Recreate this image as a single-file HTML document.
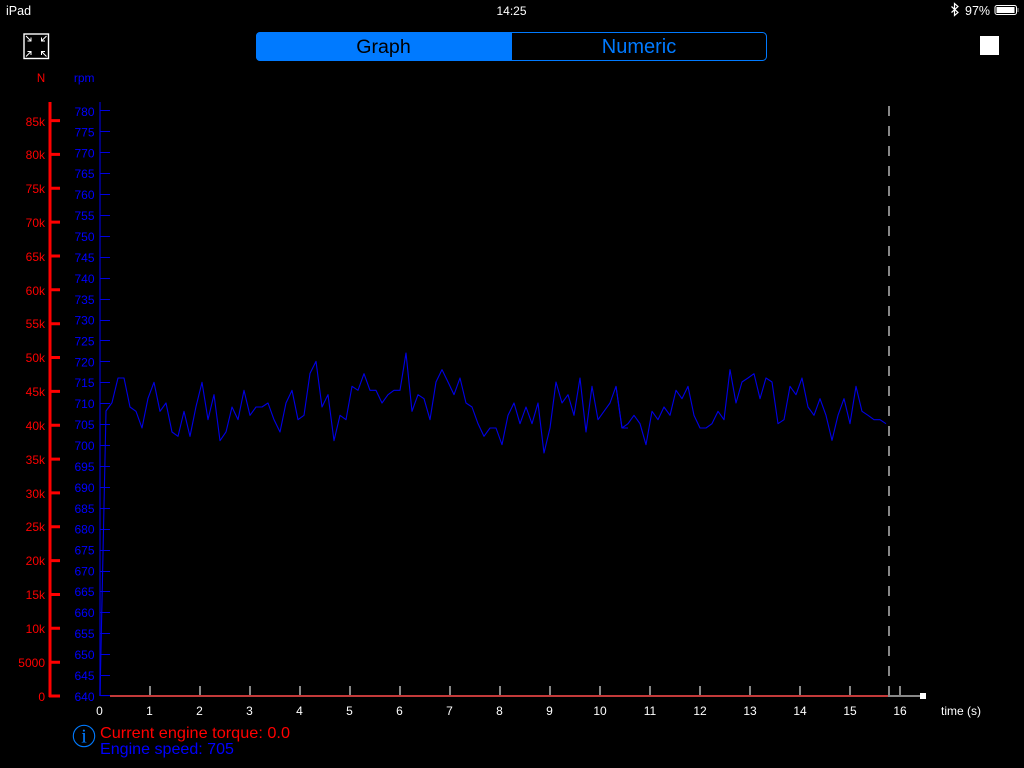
<!DOCTYPE html>
<html><head><meta charset="utf-8"><title>Graph</title>
<style>
html,body{margin:0;padding:0;background:#000;width:1024px;height:768px;overflow:hidden}
svg{position:absolute;left:0;top:0;font-family:"Liberation Sans",Arial,sans-serif}
</style></head>
<body>
<svg width="1024" height="768" viewBox="0 0 1024 768">
<rect width="1024" height="768" fill="#000"/>
<!-- status bar -->
<g fill="#fff" font-size="12.5">
<text x="6" y="15">iPad</text>
<text x="511.5" y="15" font-size="12" text-anchor="middle">14:25</text>
<text x="965" y="15" font-size="12.5">97%</text>
</g>
<path d="M951.5 6.5 L958 12.5 L954.5 15.5 V3.5 L958 6.5 L951.5 12.5" fill="none" stroke="#fff" stroke-width="1.2"/>
<rect x="995" y="5.5" width="21.5" height="9" rx="2" fill="none" stroke="#fff" stroke-width="1"/>
<rect x="996.5" y="7" width="18" height="6" fill="#fff"/>
<rect x="1017.5" y="8" width="1" height="4" fill="#999"/>
<!-- expand icon -->
<rect x="24" y="34" width="24.5" height="24.5" fill="none" stroke="#fff" stroke-width="1.4"/>
<g fill="none" stroke="#fff" stroke-width="1">
<path d="M26 36 L31 41 M31 37.5 V41 H27.5"/>
<path d="M46.5 36 L41.5 41 M41.5 37.5 V41 H45"/>
<path d="M26 56.5 L31 51.5 M27.5 51.5 H31 V55"/>
<path d="M46.5 56.5 L41.5 51.5 M45 51.5 H41.5 V55"/>
</g>
<!-- segmented control -->
<rect x="256.5" y="32.5" width="510" height="28" rx="4" fill="#000" stroke="#007aff"/>
<path d="M260 32 H512 V61 H260 A4 4 0 0 1 256 57 V36 A4 4 0 0 1 260 32 Z" fill="#007aff"/>
<text x="383.5" y="53" font-size="19.6" text-anchor="middle" fill="#000">Graph</text>
<text x="639" y="53" font-size="20" text-anchor="middle" fill="#007aff">Numeric</text>
<!-- stop -->
<rect x="980" y="36" width="19" height="19" fill="#fff"/>
<!-- axis titles -->
<text x="41" y="82" font-size="11.5" text-anchor="middle" fill="#f00">N</text>
<text x="94.5" y="82" font-size="12" text-anchor="end" fill="#00f">rpm</text>
<!-- red axis -->
<path d="M50 102 V697 M49 696 H60 M50 662.2 H60 M50 628.3 H60 M50 594.5 H60 M50 560.6 H60 M50 526.8 H60 M50 492.9 H60 M50 459.1 H60 M50 425.2 H60 M50 391.4 H60 M50 357.5 H60 M50 323.7 H60 M50 289.8 H60 M50 256 H60 M50 222.1 H60 M50 188.3 H60 M50 154.4 H60 M50 120.6 H60" stroke="#f00" stroke-width="3" fill="none"/>
<g fill="#f00" font-size="12" text-anchor="end">
<text x="45" y="701">0</text><text x="45" y="667">5000</text><text x="45" y="633">10k</text><text x="45" y="599">15k</text><text x="45" y="565">20k</text><text x="45" y="531">25k</text><text x="45" y="498">30k</text><text x="45" y="464">35k</text><text x="45" y="430">40k</text><text x="45" y="396">45k</text><text x="45" y="362">50k</text><text x="45" y="328">55k</text><text x="45" y="295">60k</text><text x="45" y="261">65k</text><text x="45" y="227">70k</text><text x="45" y="193">75k</text><text x="45" y="159">80k</text><text x="45" y="126">85k</text>
</g>
<!-- blue axis -->
<path d="M100 102 V696" stroke="#00009a" stroke-width="1.6" fill="none"/>
<path d="M100 110.5 H110 M100 131.5 H110 M100 152.5 H110 M100 173.5 H110 M100 194.5 H110 M100 215.5 H110 M100 236.5 H110 M100 257.5 H110 M100 278.5 H110 M100 299.5 H110 M100 320.5 H110 M100 340.5 H110 M100 361.5 H110 M100 382.5 H110 M100 403.5 H110 M100 424.5 H110 M100 445.5 H110 M100 466.5 H110 M100 487.5 H110 M100 508.5 H110 M100 529.5 H110 M100 550.5 H110 M100 571.5 H110 M100 591.5 H110 M100 612.5 H110 M100 633.5 H110 M100 654.5 H110 M100 675.5 H110 M100 695.5 H110" stroke="#0000e0" stroke-width="1" fill="none"/>
<g fill="#00f" font-size="12" text-anchor="end">
<text x="94.5" y="116">780</text><text x="94.5" y="136.5">775</text><text x="94.5" y="157.5">770</text><text x="94.5" y="178">765</text><text x="94.5" y="199">760</text><text x="94.5" y="220">755</text><text x="94.5" y="241">750</text><text x="94.5" y="262">745</text><text x="94.5" y="283">740</text><text x="94.5" y="304">735</text><text x="94.5" y="324.5">730</text><text x="94.5" y="345.5">725</text><text x="94.5" y="366.5">720</text><text x="94.5" y="387">715</text><text x="94.5" y="408">710</text><text x="94.5" y="429">705</text><text x="94.5" y="450">700</text><text x="94.5" y="471">695</text><text x="94.5" y="492">690</text><text x="94.5" y="513">685</text><text x="94.5" y="533.5">680</text><text x="94.5" y="554.5">675</text><text x="94.5" y="575.5">670</text><text x="94.5" y="596">665</text><text x="94.5" y="617">660</text><text x="94.5" y="638">655</text><text x="94.5" y="659">650</text><text x="94.5" y="680">645</text><text x="94.5" y="701">640</text>
</g>
<!-- x axis -->
<path d="M150 686 V696 M200 686 V696 M250 686 V696 M300 686 V696 M350 686 V696 M400 686 V696 M450 686 V696 M500 686 V696 M550 686 V696 M600 686 V696 M650 686 V696 M700 686 V696 M750 686 V696 M800 686 V696 M850 686 V696 M900 686 V696" stroke="#888" stroke-width="2" fill="none"/>
<path d="M888 696 H922" stroke="#888" stroke-width="2" fill="none"/>
<path d="M110 696 H888" stroke="#c33a3a" stroke-width="2" fill="none"/>
<path d="M100 695.6 H110" stroke="#0000e0" stroke-width="1" fill="none"/>
<rect x="920" y="693" width="6" height="6" fill="#fff"/>
<path d="M889 106 V696" stroke="#888" stroke-width="2" stroke-dasharray="10 10" fill="none"/>
<g fill="#fff" font-size="12" text-anchor="middle">
<text x="99.5" y="715">0</text><text x="149.5" y="715">1</text><text x="199.5" y="715">2</text><text x="249.5" y="715">3</text><text x="299.5" y="715">4</text><text x="349.5" y="715">5</text><text x="399.5" y="715">6</text><text x="449.5" y="715">7</text><text x="499.5" y="715">8</text><text x="549.5" y="715">9</text><text x="600" y="715">10</text><text x="650" y="715">11</text><text x="700" y="715">12</text><text x="750" y="715">13</text><text x="800" y="715">14</text><text x="850" y="715">15</text><text x="900" y="715">16</text>
</g>
<text x="941" y="715" font-size="12" fill="#fff">time (s)</text>
<!-- data -->
<g transform="translate(90 340) scale(0.33333)" fill="none" stroke="#0000e6" stroke-width="3.3" stroke-linejoin="round">
<polyline points="30,1068 48,213 66,188 84,114 102,114 120,201 138,214 156,264 174,175 192,127 210,214 228,189 246,276 264,289 282,214 300,289 318,200 336,127 354,239 372,164 390,302 408,276 426,201 444,239 462,151 480,226 498,201 516,201 534,189 552,239 570,276 588,189 606,151 624,239 642,226 660,100 678,64 696,201 714,164 732,302 750,226 768,239 786,139 804,151 822,101 840,151 858,151 876,189 894,164 912,151 930,151 948,39 966,214 984,164 1002,176 1020,239 1038,126 1056,89 1074,126 1092,164 1110,114 1128,189 1146,201 1164,251 1182,289 1200,264 1218,264 1236,314 1254,226 1272,189 1290,251 1308,201 1326,251 1344,189 1362,339 1380,264 1398,126 1416,189 1434,164 1452,226 1470,114 1488,276 1506,139 1524,239 1542,214 1560,189 1578,139 1596,264 1614,264"/>
</g>
<g transform="translate(620 340) scale(0.33333)" fill="none" stroke="#0000e6" stroke-width="3.3" stroke-linejoin="round">
<polyline points="-12,139 6,264 24,251 42,226 60,251 78,314 96,214 114,239 132,201 150,226 168,151 186,176 204,139 222,226 240,264 258,264 276,251 294,214 312,239 330,89 348,189 366,126 384,114 402,101 420,176 438,114 456,126 474,251 492,239 510,139 528,164 546,114 564,201 582,226 600,176 618,226 636,301 654,226 672,176 690,251 708,139 726,214 744,226 762,239 780,239 798,251"/>
</g>
<!-- info -->
<circle cx="84" cy="736" r="10.7" fill="none" stroke="#007aff" stroke-width="1.1"/>
<text x="84" y="742.5" font-size="20" text-anchor="middle" fill="#007aff" style="font-family:'Liberation Serif',serif">i</text>
<text x="100" y="738" font-size="16" textLength="190" lengthAdjust="spacingAndGlyphs" fill="#f00">Current engine torque: 0.0</text>
<text x="100" y="754" font-size="16" textLength="134" lengthAdjust="spacingAndGlyphs" fill="#00f">Engine speed: 705</text>
</svg>
</body></html>
